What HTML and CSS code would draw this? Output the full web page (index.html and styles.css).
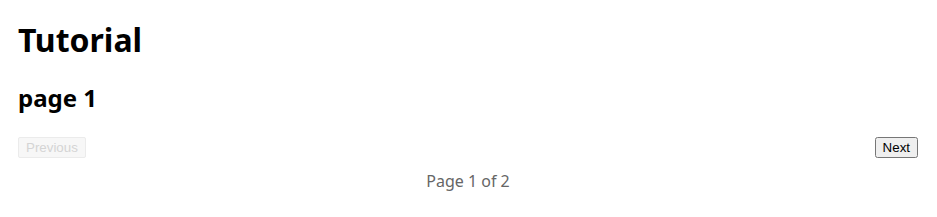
FILE: index.html
```html
<!DOCTYPE html>
<html>
<head>
<meta charset="utf-8">
<link rel="stylesheet" href="styles.css">
</head>
<body>
<div class="container">
  <h1 class="title">Tutorial</h1>
  <h2 class="page-title">page 1</h2>
  <div class="pager">
    <button class="btn" disabled>Previous</button>
    <button class="btn">Next</button>
  </div>
  <p class="page-info">Page 1 of 2</p>
</div>
</body>
</html>
```
FILE: styles.css
```css
body {
  margin: 0;
  font-family: "Noto Sans", "Open Sans", sans-serif;
  color: #000;
  background: #fff;
}
.container {
  width: 900px;
  margin: 0 18px;
}
.title {
  font-size: 32px;
  font-weight: 700;
  margin: 18px 0 0;
}
.page-title {
  font-size: 24px;
  font-weight: 700;
  margin: 20px 0 0;
}
.pager {
  display: flex;
  justify-content: space-between;
  margin-top: 23px;
}
.btn {
  font-family: "Liberation Sans", Arial, sans-serif;
  font-size: 13.333px;
}
.btn:disabled {
  background: #f7f7f7;
  border: 1px solid #ebebeb;
  border-radius: 2px;
  color: #d4d4d4;
  padding: 1px 7px;
}
.page-info {
  text-align: center;
  color: #666;
  font-size: 16px;
  margin: 12px 0 0;
}
```
